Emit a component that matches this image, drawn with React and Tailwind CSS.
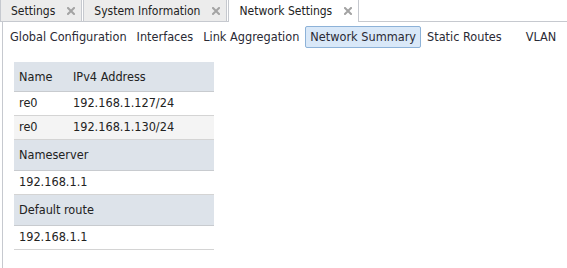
import React from "react";

const font = { fontFamily: '"DejaVu Sans Condensed", "DejaVu Sans", Tahoma, sans-serif' };

const CloseX = () => (
  <svg width="8" height="8" viewBox="0 0 8 8" className="shrink-0">
    <path d="M1 1 L7 7 M7 1 L1 7" stroke="#a3a3a3" strokeWidth="2" strokeLinecap="square" />
  </svg>
);

const Tab = ({ label, active }) => (
  <div
    className={`flex items-center gap-[12px] pl-[10px] pr-[6px] border-r border-l border-[#c6c9cf] ${
      active ? "bg-white border-b-0" : "bg-[#ececec] border-b"
    }`}
  >
    <span className="text-[12px] text-[#222]">{label}</span>
    <CloseX />
  </div>
);

const navItems = ["Global Configuration", "Interfaces", "Link Aggregation", "Network Summary", "Static Routes"];

const HeadRow = ({ children, tall }) => (
  <div
    className={`flex items-center pt-px bg-[#dde3ea] border-b border-[#c8cbcf] text-[12.6px] text-[#222] ${
      tall ? "h-[31px]" : "h-[30px]"
    }`}
  >
    {children}
  </div>
);

const Row = ({ children, alt }) => (
  <div
    className={`flex h-[24px] items-center border-b border-[#d4d4d4] text-[12.6px] text-[#222] ${
      alt ? "bg-[#f4f4f4]" : "bg-white"
    }`}
  >
    {children}
  </div>
);

export default function App() {
  return (
    <div className="w-[567px] h-[268px] bg-white overflow-hidden" style={font}>
      {/* tab bar */}
      <div className="flex h-[22px]">
        <Tab label="Settings" />
        <div className="w-px border-b border-[#c6c9cf]" />
        <Tab label="System Information" />
        <div className="w-px border-b border-[#c6c9cf]" />
        <Tab label="Network Settings" active />
        <div className="flex-1 border-b border-[#c6c9cf]" />
      </div>

      <div className="ml-[2px] h-[246px] border-l border-[#c6c9cf]">
        {/* sub navigation */}
        <div className="flex items-center h-[27px] pt-[3px] pl-[2px] text-[12.6px] text-[#2a2a35]">
          {navItems.map((item) =>
            item === "Network Summary" ? (
              <div
                key={item}
                className="h-[22px] flex items-center px-[4px] mx-[1px] rounded-[2px] border border-[#8db2d8] bg-[#d9e8f8]"
              >
                {item}
              </div>
            ) : (
              <div key={item} className="px-[5px]">
                {item}
              </div>
            )
          )}
          <div className="pl-[19px]">VLAN</div>
        </div>

        {/* summary table */}
        <div className="ml-[11px] mt-[13px] w-[200px]">
          <HeadRow>
            <div className="w-[54px] pl-[5px]">Name</div>
            <div className="pl-[5px]">IPv4 Address</div>
          </HeadRow>
          <Row>
            <div className="w-[54px] pl-[5px]">re0</div>
            <div className="pl-[5px]">192.168.1.127/24</div>
          </Row>
          <Row alt>
            <div className="w-[54px] pl-[5px]">re0</div>
            <div className="pl-[5px]">192.168.1.130/24</div>
          </Row>
          <HeadRow tall>
            <div className="pl-[5px]">Nameserver</div>
          </HeadRow>
          <Row>
            <div className="pl-[5px]">192.168.1.1</div>
          </Row>
          <HeadRow tall>
            <div className="pl-[5px]">Default route</div>
          </HeadRow>
          <Row>
            <div className="pl-[5px]">192.168.1.1</div>
          </Row>
        </div>
      </div>
    </div>
  );
}
